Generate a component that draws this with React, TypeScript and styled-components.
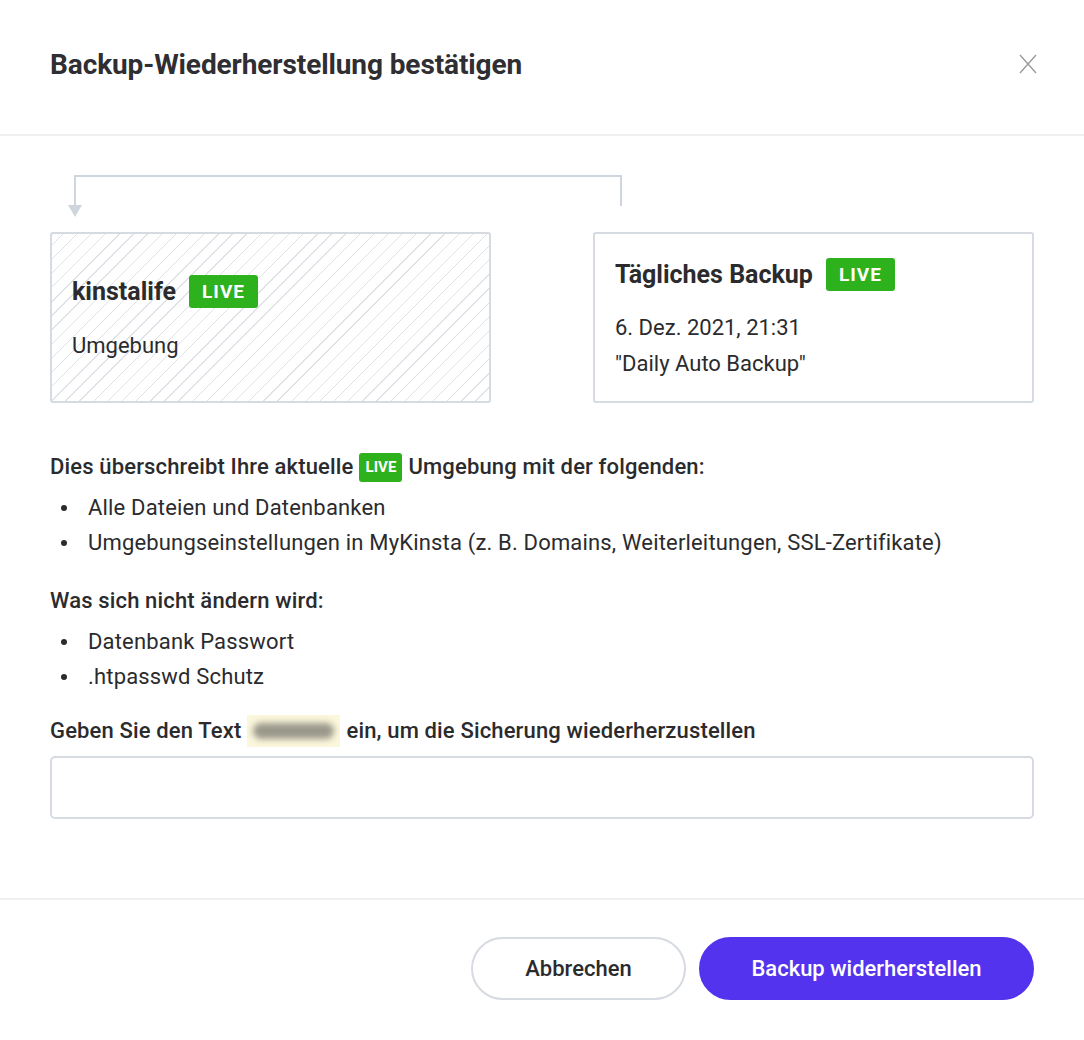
import styled, { createGlobalStyle } from 'styled-components';

const GlobalStyle = createGlobalStyle`
  html, body {
    margin: 0;
    padding: 0;
    background: #ffffff;
  }
  body {
    font-family: Roboto, "Liberation Sans", Arial, sans-serif;
    color: #2b2b2e;
  }
  * {
    box-sizing: border-box;
  }
`;

const Modal = styled.div`
  width: 1084px;
  height: 1040px;
  display: flex;
  flex-direction: column;
  background: #ffffff;
`;

const Header = styled.header`
  height: 136px;
  flex-shrink: 0;
  display: flex;
  align-items: center;
  justify-content: space-between;
  padding: 0 44px 6px 50px;
  border-bottom: 2px solid #efefef;
`;

const Title = styled.h1`
  margin: 0;
  font-size: 28px;
  font-weight: 700;
  letter-spacing: -0.1px;
  color: #2e2e33;
`;

const CloseButton = styled.button`
  border: none;
  background: none;
  padding: 0;
  width: 24px;
  height: 24px;
  display: grid;
  place-items: center;
  cursor: pointer;
  color: #9a9a9e;
`;

const Body = styled.main`
  flex: 1;
  padding: 38px 50px 0;
`;

const Connector = styled.svg`
  display: block;
  margin-left: 16px;
`;

const Cards = styled.div`
  display: flex;
  gap: 102px;
  margin-top: 14px;
`;

const Card = styled.div<{ $hatched?: boolean }>`
  width: 441px;
  height: 171px;
  border: 2px solid #d6dae1;
  border-radius: 3px;
  padding: 0 20px;
  display: flex;
  flex-direction: column;
  justify-content: center;
  background: ${(p) =>
    p.$hatched
      ? 'repeating-linear-gradient(-45deg, #ffffff 0px, #ffffff 9px, #dfe2e7 9px, #dfe2e7 10px)'
      : '#ffffff'};
`;

const CardTitle = styled.div`
  display: flex;
  align-items: center;
  gap: 13px;
  font-size: 25px;
  font-weight: 700;
  color: #2b2b2e;
`;

const Badge = styled.span<{ $small?: boolean }>`
  display: inline-flex;
  align-items: center;
  justify-content: center;
  background: #2db11c;
  color: #ffffff;
  border-radius: 3px;
  font-weight: 700;
  letter-spacing: ${(p) => (p.$small ? '0' : '1px')};
  font-size: ${(p) => (p.$small ? '15px' : '19px')};
  height: ${(p) => (p.$small ? '29px' : '33px')};
  width: ${(p) => (p.$small ? '43px' : '69px')};
  flex-shrink: 0;
`;

const CardLine = styled.div<{ $gap: number }>`
  margin-top: ${(p) => p.$gap}px;
  font-size: 22px;
  line-height: 28px;
  color: #2b2b2e;
`;

const Lead = styled.p<{ $top: number }>`
  margin: ${(p) => p.$top}px 0 0;
  font-size: 22px;
  font-weight: 500;
  line-height: 30px;
  letter-spacing: 0.15px;
  color: #2b2b2e;
  display: flex;
  align-items: center;
  gap: 6px;
`;

const List = styled.ul`
  margin: 8px 0 0;
  padding: 0 0 0 10px;
  list-style: none;
  font-size: 22px;
  line-height: 35px;
  letter-spacing: 0.17px;
  color: #2b2b2e;
`;

const Item = styled.li`
  display: flex;
  &::before {
    content: '';
    width: 6px;
    height: 6px;
    margin: 15px 21px 0 1px;
    border-radius: 50%;
    background: #2b2b2e;
    flex-shrink: 0;
  }
`;

const Blurred = styled.span`
  display: inline-block;
  width: 93px;
  height: 32px;
  background: #fbf7dc;
  position: relative;
  overflow: hidden;
  &::after {
    content: '';
    position: absolute;
    left: 6px;
    right: 6px;
    top: 8px;
    bottom: 8px;
    background: #9a988b;
    border-radius: 8px;
    filter: blur(3px);
  }
`;

const Input = styled.input`
  display: block;
  width: 100%;
  height: 63px;
  margin-top: 9px;
  border: 2px solid #d6dae1;
  border-radius: 5px;
  padding: 0 16px;
  font-size: 22px;
  font-family: inherit;
  outline: none;
`;

const Footer = styled.footer`
  height: 142px;
  flex-shrink: 0;
  border-top: 2px solid #efefef;
  display: flex;
  align-items: center;
  justify-content: flex-end;
  gap: 13px;
  padding: 0 50px 4px;
`;

const Button = styled.button<{ $primary?: boolean }>`
  height: 63px;
  width: ${(p) => (p.$primary ? '335px' : '215px')};
  border-radius: 32px;
  border: 2px solid ${(p) => (p.$primary ? '#5333ed' : '#d6dae1')};
  background: ${(p) => (p.$primary ? '#5333ed' : '#ffffff')};
  color: ${(p) => (p.$primary ? '#ffffff' : '#2b2b2e')};
  font-family: inherit;
  font-size: 22px;
  font-weight: 500;
  cursor: pointer;
`;

export default function App() {
  return (
    <>
      <GlobalStyle />
      <Modal>
        <Header>
          <Title>Backup-Wiederherstellung bestätigen</Title>
          <CloseButton aria-label="Schließen">
            <svg width="18" height="20" viewBox="0 0 18 20" fill="none" stroke="currentColor" strokeWidth="1.4">
              <path d="M1 1 L17 19 M17 1 L1 19" />
            </svg>
          </CloseButton>
        </Header>
        <Body>
          <Connector width="560" height="44" viewBox="0 0 560 44">
            <path d="M9 32 V2 H555 V32" fill="none" stroke="#cfd5dd" strokeWidth="2" />
            <path d="M2 31 H16 L9 43 Z" fill="#cfd5dd" />
          </Connector>
          <Cards>
            <Card $hatched>
              <CardTitle>
                kinstalife <Badge>LIVE</Badge>
              </CardTitle>
              <CardLine $gap={24}>Umgebung</CardLine>
            </Card>
            <Card>
              <CardTitle>
                Tägliches Backup <Badge>LIVE</Badge>
              </CardTitle>
              <CardLine $gap={23}>6. Dez. 2021, 21:31</CardLine>
              <CardLine $gap={8}>"Daily Auto Backup"</CardLine>
            </Card>
          </Cards>
          <Lead $top={49}>
            Dies überschreibt Ihre aktuelle <Badge $small>LIVE</Badge> Umgebung mit der folgenden:
          </Lead>
          <List>
            <Item>Alle Dateien und Datenbanken</Item>
            <Item>Umgebungseinstellungen in MyKinsta (z. B. Domains, Weiterleitungen, SSL-Zertifikate)</Item>
          </List>
          <Lead $top={26}>Was sich nicht ändern wird:</Lead>
          <List>
            <Item>Datenbank Passwort</Item>
            <Item>.htpasswd Schutz</Item>
          </List>
          <Lead $top={21}>
            Geben Sie den Text <Blurred /> ein, um die Sicherung wiederherzustellen
          </Lead>
          <Input type="text" />
        </Body>
        <Footer>
          <Button>Abbrechen</Button>
          <Button $primary>Backup widerherstellen</Button>
        </Footer>
      </Modal>
    </>
  );
}
